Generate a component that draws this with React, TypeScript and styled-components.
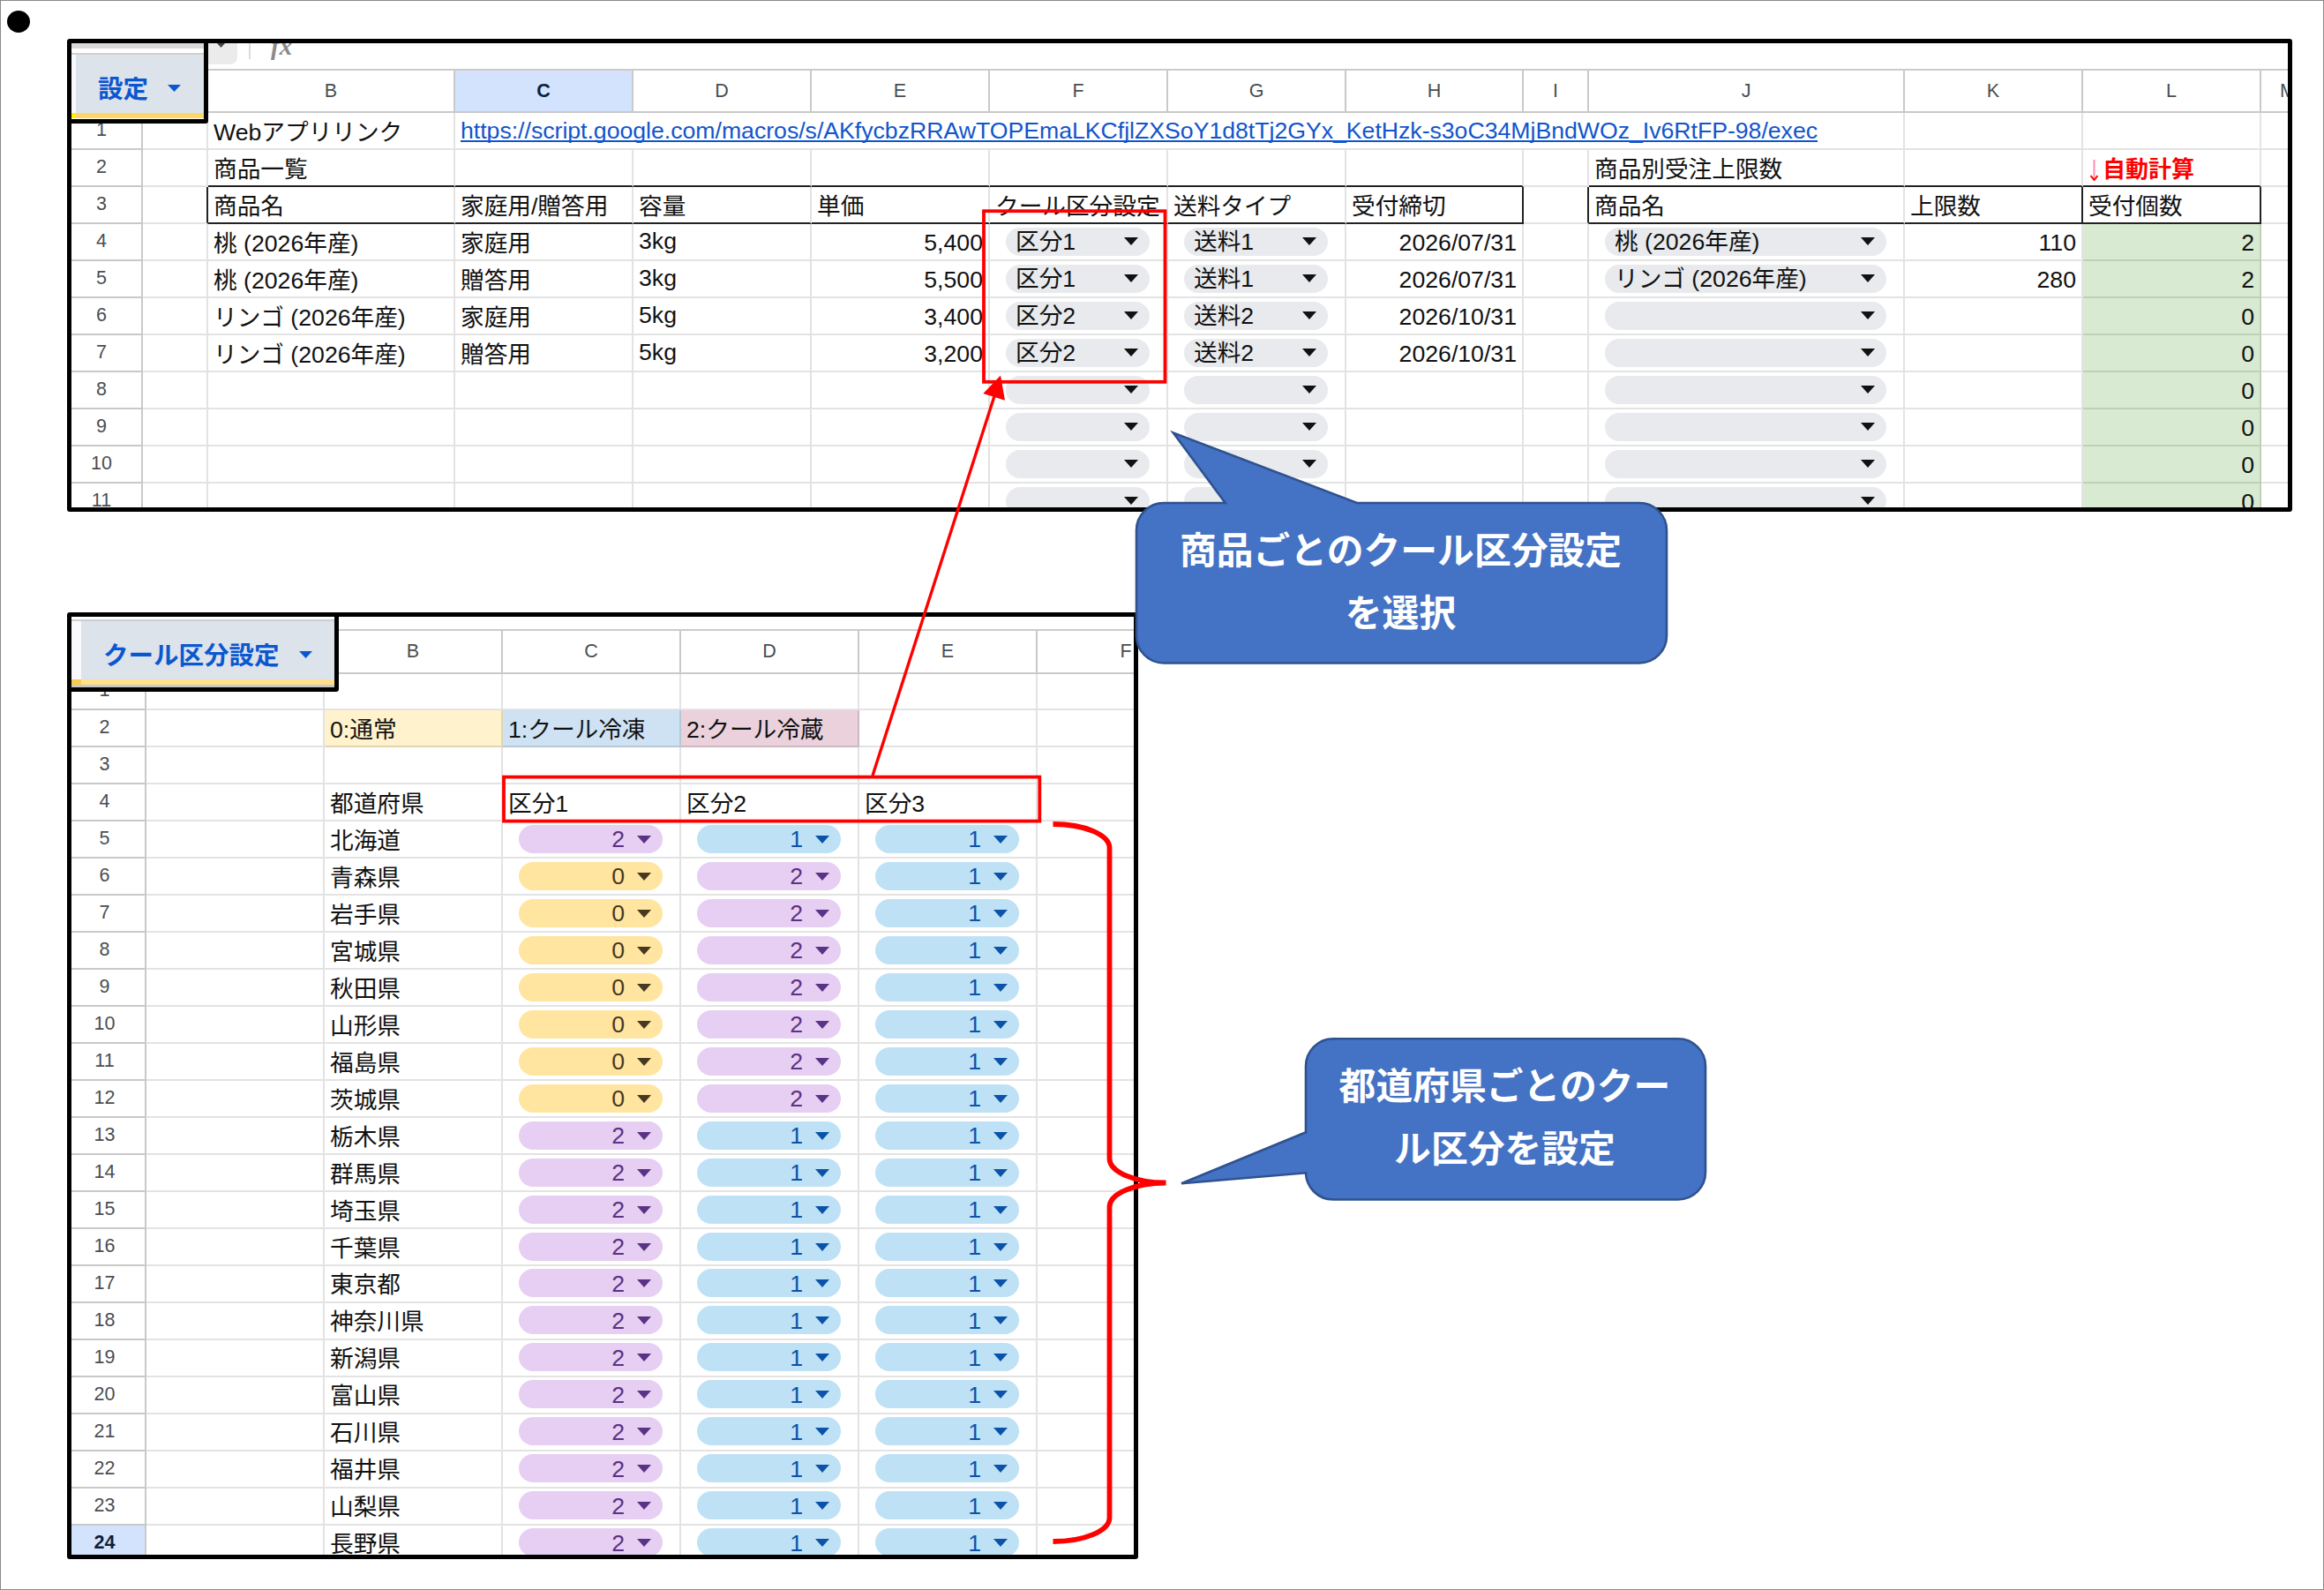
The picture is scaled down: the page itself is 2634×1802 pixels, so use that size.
import React from 'react';
import styled, { createGlobalStyle, css } from 'styled-components';

const GlobalStyle = createGlobalStyle`
  *, *::before, *::after { box-sizing: border-box; }
  body { margin: 0; background: #fff; }
`;

const Page = styled.main`
  position: relative;
  width: 2634px;
  height: 1802px;
  padding: 43px 0 0 75px;
  border: 1px solid #8a8a8a;
  overflow: hidden;
  background: #fff;
  display: flex;
  flex-direction: column;
  align-items: flex-start;
  gap: 114px;
  color: #111;
  font-family: 'Liberation Sans', 'Noto Sans CJK JP', sans-serif;
  font-size: 26.67px;
`;

const Bullet = styled.span`
  position: absolute;
  left: 7px;
  top: 11px;
  width: 26px;
  height: 25px;
  border-radius: 50%;
  background: #000;
`;

const Panel = styled.section<{ $w: number; $h: number }>`
  position: relative;
  flex: none;
  width: ${p => p.$w}px;
  height: ${p => p.$h}px;
  border: 5px solid #000;
  border-radius: 3px;
  overflow: hidden;
  background: #fff;
`;

const Toolbar = styled.div<{ $h: number }>`
  height: ${p => p.$h}px;
  border-bottom: 2px solid #cbcbcb;
  display: flex;
  align-items: flex-start;
  padding-left: 155px;
  overflow: hidden;
`;

const NameBox = styled.div`
  display: flex;
  align-items: flex-start;
  width: 33px;
  height: 24px;
  border-radius: 0 0 8px 0;
  background: #ebebeb;
  padding-left: 10px;
`;

const Divider = styled.div`
  width: 2px;
  height: 18px;
  margin-left: 13px;
  background: #d9dce2;
`;

const Fx = styled.span`
  margin: -14px 0 0 23px;
  font: italic 700 29px/34px 'Liberation Serif', serif;
  color: #8a8a8a;
`;

const Row = styled.div<{ $h: number }>`
  display: flex;
  width: max-content;
  height: ${p => p.$h}px;
`;

const cellBase = css<{ $w: number }>`
  flex: none;
  width: ${p => p.$w}px;
  display: flex;
  align-items: center;
  white-space: nowrap;
`;

const HeadCell = styled.div<{ $w: number; $active?: boolean; $right?: number }>`
  ${cellBase}
  justify-content: center;
  padding-right: ${p => p.$right ?? 0}px;
  padding-top: 1px;
  border-right: 2px solid #c9c9c9;
  border-bottom: 2px solid #c9c9c9;
  background: ${p => (p.$active ? '#d3e3fd' : '#fff')};
  color: ${p => (p.$active ? '#0b1f3d' : '#4b4e52')};
  font-size: 21.5px;
  font-weight: ${p => (p.$active ? 700 : 400)};
`;

const NumCell = styled(HeadCell)`
  padding-top: 0;
  padding-bottom: 1px;
`;

const Cell = styled.div<{
  $w: number;
  $align?: 'right';
  $bg?: string;
  $line?: string;
  $inkRight?: boolean;
  $inkBottom?: boolean;
}>`
  ${cellBase}
  justify-content: ${p => (p.$align === 'right' ? 'flex-end' : 'flex-start')};
  padding: ${p => (p.$align === 'right' ? '2px 6px 0 6px' : '0 6px 2px 6px')};
  border-right: 2px solid ${p => (p.$inkRight ? '#222' : p.$line ?? '#e3e3e3')};
  border-bottom: 2px solid ${p => (p.$inkBottom ? '#222' : p.$line ?? '#e3e3e3')};
  background: ${p => p.$bg ?? 'transparent'};
`;

const Link = styled.a`
  margin-top: 2px;
  color: #1155cc;
  text-decoration: underline;
  text-decoration-thickness: 2px;
  text-underline-offset: 2px;
  text-decoration-skip-ink: none;
  letter-spacing: -0.015px;
`;

const Auto = styled.strong`
  display: flex;
  align-items: center;
  color: #f00;
  font-size: 26px;
`;

const ThinArrow = styled.svg`
  margin: 8px 5px 0 2px;
`;

const ChipBox = styled.div<{ $bg: string; $ink: string; $num?: boolean }>`
  flex: 1;
  height: 32px;
  margin: 1px 13px 0 12px;
  padding: ${p => (p.$num ? 1 : 0)}px 13px 0 11px;
  border-radius: 16px;
  background: ${p => p.$bg};
  color: ${p => p.$ink};
  display: flex;
  align-items: center;
  justify-content: ${p => (p.$num ? 'flex-end' : 'space-between')};
  gap: 14px;
  line-height: 30px;
`;

const Caret = ({ w = 16, h = 9 }: { w?: number; h?: number }) => (
  <svg width={w} height={h} viewBox="0 0 16 9" preserveAspectRatio="none">
    <path d="M0 0H16L8 9Z" fill="currentColor" />
  </svg>
);

const TabFrame = styled.div<{ $w: number; $h: number }>`
  position: absolute;
  left: -5px;
  top: -5px;
  width: ${p => p.$w}px;
  height: ${p => p.$h}px;
  border: 5px solid #000;
  border-radius: 3px;
  background: #fff;
  display: flex;
  flex-direction: column;
`;

const TabStrip = styled.div<{ $h: number; $bg: string; $gap: number }>`
  flex: none;
  height: ${p => p.$h + p.$gap + 2}px;
  background: linear-gradient(${p => p.$bg} ${p => p.$h}px, #fff ${p => p.$h}px);
  border-bottom: 2px solid #cfcfcf;
`;

const TabBody = styled.div<{ $edge: number; $text: number; $gap: number }>`
  flex: 1;
  display: flex;
  align-items: center;
  border-left: ${p => p.$edge}px solid #f8fafd;
  background: #dde3ea;
  padding: 12px 0 0 ${p => p.$text}px;
  gap: ${p => p.$gap}px;
  color: #0b57d0;
  font-size: 28.5px;
  font-weight: 700;
  line-height: 34px;
  white-space: nowrap;

  svg {
    margin-top: -3px;
  }
`;

const TabAccent = styled.div<{ $edge: number; $left: string; $bg: string }>`
  flex: none;
  height: 6px;
  background: ${p => p.$bg};
  border-left: ${p => p.$edge}px solid ${p => p.$left};
`;

const TabFoot = styled.div<{ $h: number; $bg: string }>`
  flex: none;
  height: ${p => p.$h}px;
  background: ${p => p.$bg};
`;

const Markup = styled.svg`
  position: absolute;
  left: -1px;
  top: -1px;
`;

const Callout = styled.p<{ $x: number; $y: number; $w: number }>`
  position: absolute;
  left: ${p => p.$x}px;
  top: ${p => p.$y}px;
  width: ${p => p.$w}px;
  height: 184px;
  margin: 0;
  padding-top: 16.5px;
  color: #fff;
  font: 700 41.8px/71.3px 'Noto Sans CJK JP', sans-serif;
  text-align: center;
  white-space: pre-line;
`;

const GREY = '#e8eaed';
const TONES: Record<string, [string, string]> = {
  '0': ['#ffe5a0', '#473821'],
  '1': ['#bfe1f6', '#0a53a8'],
  '2': ['#e6cff2', '#5a3286'],
};

const Choice = ({ label }: { label?: string }) => (
  <ChipBox $bg={GREY} $ink="#111">
    <span>{label}</span>
    <Caret />
  </ChipBox>
);

const Level = ({ value }: { value: string }) => (
  <ChipBox $bg={TONES[value][0]} $ink={TONES[value][1]} $num>
    <span>{value}</span>
    <Caret />
  </ChipBox>
);

const COLS: [string, number][] = [
  ['A', 74], ['B', 280], ['C', 202], ['D', 202], ['E', 202], ['F', 202], ['G', 202],
  ['H', 201], ['I', 74], ['J', 358], ['K', 202], ['L', 202], ['M', 202],
];

const PRODUCTS = [
  ['桃 (2026年産)', '家庭用', '3kg', '5,400', '区分1', '送料1', '2026/07/31'],
  ['桃 (2026年産)', '贈答用', '3kg', '5,500', '区分1', '送料1', '2026/07/31'],
  ['リンゴ (2026年産)', '家庭用', '5kg', '3,400', '区分2', '送料2', '2026/10/31'],
  ['リンゴ (2026年産)', '贈答用', '5kg', '3,200', '区分2', '送料2', '2026/10/31'],
];
const LIMITS = [
  ['桃 (2026年産)', '110', '2'],
  ['リンゴ (2026年産)', '280', '2'],
];
const URL_TEXT =
  'https://script.google.com/macros/s/AKfycbzRRAwTOPEmaLKCfjlZXSoY1d8tTj2GYx_KetHzk-s3oC34MjBndWOz_Iv6RtFP-98/exec';

const HEADINGS: Record<string, string> = {
  B: '商品名', C: '家庭用/贈答用', D: '容量', E: '単価', F: 'クール区分設定', G: '送料タイプ',
  H: '受付締切', J: '商品名', K: '上限数', L: '受付個数',
};

const boxed = (name: string) => 'BCDEFGHJKL'.includes(name);

function SettingsSheet() {
  return (
    <Panel $w={2522} $h={536}>
      <Toolbar $h={31}>
        <NameBox>
          <svg width="9" height="5" viewBox="0 0 9 5"><path d="M0 0H9L4.5 5Z" fill="#444" /></svg>
        </NameBox>
        <Divider />
        <Fx>fx</Fx>
      </Toolbar>
      <Row $h={48}>
        <HeadCell $w={81} />
        {COLS.map(([name, w]) => (
          <HeadCell key={name} $w={w} $active={name === 'C'} $right={name === 'M' ? 140 : 0}>
            {name !== 'A' && name}
          </HeadCell>
        ))}
      </Row>
      <Row $h={42}>
        <NumCell $w={81} $right={11}>1</NumCell>
        <Cell $w={74} />
        <Cell $w={280}>Webアプリリンク</Cell>
        <Cell $w={1643}><Link>{URL_TEXT}</Link></Cell>
        <Cell $w={202} />
        <Cell $w={202} />
        <Cell $w={202} />
      </Row>
      <Row $h={42}>
        <NumCell $w={81} $right={11}>2</NumCell>
        {COLS.map(([name, w]) => (
          <Cell key={name} $w={w} $inkBottom={boxed(name)}>
            {name === 'B' && '商品一覧'}
            {name === 'J' && '商品別受注上限数'}
            {name === 'L' && (
              <Auto>
                <ThinArrow width="9" height="24" viewBox="0 0 9 24">
                  <path d="M4.5 0V21" stroke="#ff8cb0" strokeWidth="2" />
                  <path d="M0.5 18L4.5 23L8.5 18" fill="none" stroke="#f00" strokeWidth="2" />
                </ThinArrow>
                自動計算
              </Auto>
            )}
          </Cell>
        ))}
      </Row>
      <Row $h={42}>
        <NumCell $w={81} $right={11}>3</NumCell>
        {COLS.map(([name, w]) => (
          <Cell key={name} $w={w} $inkBottom={boxed(name)} $inkRight={'AHIKL'.includes(name)}>
            {HEADINGS[name]}
          </Cell>
        ))}
      </Row>
      {Array.from({ length: 8 }, (_, i) => {
        const p = PRODUCTS[i] ?? [];
        const l = LIMITS[i] ?? [];
        return (
          <Row key={i} $h={42}>
            <NumCell $w={81} $right={11}>{i + 4}</NumCell>
            <Cell $w={74} />
            <Cell $w={280}>{p[0]}</Cell>
            <Cell $w={202}>{p[1]}</Cell>
            <Cell $w={202}>{p[2]}</Cell>
            <Cell $w={202} $align="right">{p[3]}</Cell>
            <Cell $w={202}><Choice label={p[4]} /></Cell>
            <Cell $w={202}><Choice label={p[5]} /></Cell>
            <Cell $w={201} $align="right">{p[6]}</Cell>
            <Cell $w={74} />
            <Cell $w={358}><Choice label={l[0]} /></Cell>
            <Cell $w={202} $align="right">{l[1]}</Cell>
            <Cell $w={202} $align="right" $bg="#d9ead3" $line="#bfd0b9">{l[2] ?? '0'}</Cell>
            <Cell $w={202} />
          </Row>
        );
      })}
      <TabFrame $w={160} $h={96}>
        <TabStrip $h={6} $bg="#d9d9d9" $gap={5} />
        <TabBody $edge={5} $text={25} $gap={22}>
          設定
          <Caret w={15} h={8} />
        </TabBody>
        <TabAccent $edge={5} $left="#fff000" $bg="#fed766" />
        <TabFoot $h={1} $bg="#fff" />
      </TabFrame>
    </Panel>
  );
}

const PREFS: [string, string][] = [
  ['北海道', '211'], ['青森県', '021'], ['岩手県', '021'], ['宮城県', '021'], ['秋田県', '021'],
  ['山形県', '021'], ['福島県', '021'], ['茨城県', '021'], ['栃木県', '211'], ['群馬県', '211'],
  ['埼玉県', '211'], ['千葉県', '211'], ['東京都', '211'], ['神奈川県', '211'], ['新潟県', '211'],
  ['富山県', '211'], ['石川県', '211'], ['福井県', '211'], ['山梨県', '211'], ['長野県', '211'],
];

const TOP_ROWS: string[][] = [
  ['', '', '', '', '', ''],
  ['', '0:通常', '1:クール冷凍', '2:クール冷蔵', '', ''],
  ['', '', '', '', '', ''],
  ['', '都道府県', '区分1', '区分2', '区分3', ''],
];
const LEGEND: Record<number, [string, string]> = {
  1: ['#fff2cc', '#e0d6b4'],
  2: ['#cfe2f3', '#b6c7d6'],
  3: ['#ead1dc', '#ceb8c2'],
};

function CoolSheet() {
  const h = 41.97;
  return (
    <Panel $w={1214} $h={1073}>
      <Toolbar $h={16} />
      <Row $h={48.5}>
        <HeadCell $w={85} />
        <HeadCell $w={202} />
        {['B', 'C', 'D', 'E', 'F'].map(c => <HeadCell key={c} $w={202}>{c}</HeadCell>)}
      </Row>
      {TOP_ROWS.map((cells, r) => (
        <Row key={r} $h={h}>
          <NumCell $w={85} $right={8}>{r + 1}</NumCell>
          {cells.map((t, c) => {
            const tone = r === 1 ? LEGEND[c] : undefined;
            return <Cell key={c} $w={202} $bg={tone?.[0]} $line={tone?.[1]}>{t}</Cell>;
          })}
        </Row>
      ))}
      {PREFS.map(([name, levels], i) => (
        <Row key={name} $h={h}>
          <NumCell $w={85} $right={8} $active={i === 19}>{i + 5}</NumCell>
          <Cell $w={202} />
          <Cell $w={202}>{name}</Cell>
          {levels.split('').map((v, c) => <Cell key={c} $w={202}><Level value={v} /></Cell>)}
          <Cell $w={202} />
        </Row>
      ))}
      <TabFrame $w={308} $h={90}>
        <TabStrip $h={1} $bg="#fff" $gap={2} />
        <TabBody $edge={11} $text={25} $gap={22}>
          クール区分設定
          <Caret w={15} h={8} />
        </TabBody>
        <TabAccent $edge={11} $left="#fbc94f" $bg="#ffe08a" />
        <TabFoot $h={3} $bg="#c8c8c8" />
      </TabFrame>
    </Panel>
  );
}

export default function App() {
  return (
    <Page>
      <GlobalStyle />
      <Bullet />
      <SettingsSheet />
      <CoolSheet />
      <Markup width="2634" height="1802" viewBox="0 0 2634 1802">
        <g fill="none" stroke="#f00" strokeWidth="3.8">
          <rect x="1115" y="239.2" width="205.5" height="193.6" />
          <rect x="571" y="880.6" width="607.3" height="50" />
          <path d="M989 879L1127 449" strokeWidth="3.4" />
          <path
            d="M1193.5 934C1229 934 1257.5 946 1257.5 961V1313C1257.5 1328 1286 1340.5 1321.5 1340.5C1286 1340.5 1257.5 1353 1257.5 1368V1720C1257.5 1735 1229 1747 1193.5 1747"
            strokeWidth="5.8"
            strokeLinejoin="bevel"
          />
        </g>
        <path d="M1134 425.5L1114.3 446L1139 453.8Z" fill="#f00" />
        <g fill="#4472c4" stroke="#2f528f" strokeWidth="2.6">
          <path d="M1319 570H1388.7L1329.8 490.5L1538 570H1858A31 31 0 0 1 1889 601V720.5A31 31 0 0 1 1858 751.5H1319A31 31 0 0 1 1288 720.5V601A31 31 0 0 1 1319 570Z" />
          <path d="M1511 1177.3H1902A31 31 0 0 1 1933 1208.3V1328.5A31 31 0 0 1 1902 1359.5H1511A31 31 0 0 1 1480 1329.3L1339 1341.3L1480 1283.3V1208.3A31 31 0 0 1 1511 1177.3Z" />
        </g>
      </Markup>
      <Callout $x={1284.5} $y={568} $w={604}>{'商品ごとのクール区分設定\nを選択'}</Callout>
      <Callout $x={1476.5} $y={1175} $w={456}>{'都道府県ごとのクー\nル区分を設定'}</Callout>
    </Page>
  );
}
